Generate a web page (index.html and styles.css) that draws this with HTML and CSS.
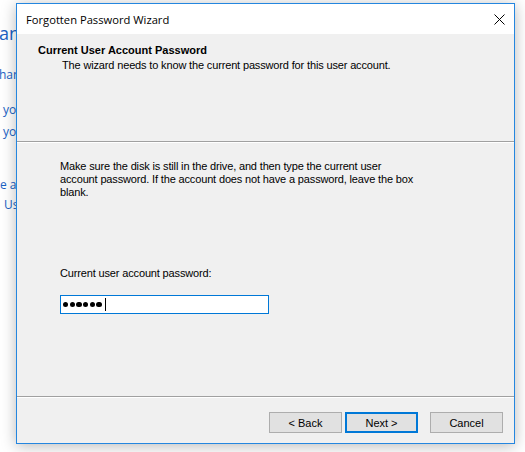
FILE: index.html
```html
<!DOCTYPE html>
<html>
<head>
<meta charset="utf-8">
<link rel="stylesheet" href="styles.css">
</head>
<body>
<div class="desktop">
  <div class="panel">
    <div class="pl pl-head">ang</div>
    <div class="pl pl-2">han</div>
    <div class="pl pl-3">yo</div>
    <div class="pl pl-4">yo</div>
    <div class="pl pl-5">e ar</div>
    <div class="pl pl-6">Us</div>
  </div>

  <div class="window">
    <div class="titlebar">
      <span class="title">Forgotten Password Wizard</span>
      <svg class="close" width="11" height="11" viewBox="0 0 11 11">
        <path d="M0.5 0.5 L10.5 10.5 M10.5 0.5 L0.5 10.5" stroke="#000" stroke-width="1" fill="none"/>
      </svg>
    </div>
    <div class="header">
      <div class="h-title">Current User Account Password</div>
      <div class="h-sub">The wizard needs to know the current password for this user account.</div>
    </div>
    <div class="sep"></div>
    <div class="content">
      <p class="para">Make sure the disk is still in the drive, and then type the current user<br>account password. If the account does not have a password, leave the box<br>blank.</p>
      <div class="label">Current user account password:</div>
      <div class="input">
        <span class="dot"></span><span class="dot"></span><span class="dot"></span><span class="dot"></span><span class="dot"></span><span class="dot"></span><span class="caret"></span>
      </div>
    </div>
    <div class="sep"></div>
    <div class="footer">
      <button class="btn">&lt; Back</button>
      <button class="btn btn-default">Next &gt;</button>
      <button class="btn btn-cancel">Cancel</button>
    </div>
  </div>
</div>
</body>
</html>
```

FILE: styles.css
```css
* { box-sizing: border-box; }
html, body { margin: 0; padding: 0; }
body {
  width: 525px;
  height: 452px;
  overflow: hidden;
  background: #ffffff;
  font-family: "Liberation Sans", Arial, sans-serif;
}
.desktop {
  position: relative;
  width: 525px;
  height: 452px;
  overflow: hidden;
}
.panel {
  padding-top: 21px;
  color: #1a62c4;
  font-family: "Open Sans", "Noto Sans", sans-serif;
  font-size: 12px;
  white-space: nowrap;
}
.pl { line-height: 16px; }
.pl-head { font-size: 18px; line-height: 24px; margin-left: -1px; }
.pl-2 { margin-top: 22px; margin-left: -1px; }
.pl-3 { margin-top: 19px; margin-left: 3px; }
.pl-4 { margin-top: 6px; margin-left: 3px; }
.pl-5 { margin-top: 37px; margin-left: 0; }
.pl-6 { margin-top: 4px; margin-left: 4px; }

.window {
  position: absolute;
  left: 16px;
  top: 3px;
  width: 499px;
  height: 441px;
  border: 1px solid #2486df;
  background: #f0f0f0;
  display: flex;
  flex-direction: column;
  box-shadow: 0 2px 14px rgba(0, 0, 0, 0.28);
}
.titlebar {
  height: 30px;
  flex: 0 0 30px;
  background: #ffffff;
  display: flex;
  align-items: center;
  justify-content: space-between;
  padding-left: 9px;
  padding-right: 9px;
}
.title {
  font-family: "Open Sans", "Noto Sans", sans-serif;
  font-size: 11.2px;
  color: #000;
}
.close { display: block; }

.header {
  flex: 0 0 107px;
  padding-top: 10px;
  font-size: 11px;
  line-height: 13px;
  color: #000;
  letter-spacing: -0.15px;
}
.h-title {
  font-weight: bold;
  padding-left: 21px;
  letter-spacing: 0;
}
.h-sub {
  padding-left: 45px;
  margin-top: 2px;
}
.sep {
  flex: 0 0 2px;
  border-top: 1px solid #a0a0a0;
  border-bottom: 1px solid #ffffff;
}
.content {
  flex: 1 1 auto;
  padding-top: 17px;
  padding-left: 43px;
  font-size: 11px;
  line-height: 13px;
  color: #000;
  letter-spacing: -0.15px;
}
.para {
  margin: 0;
  white-space: nowrap;
}
.label {
  margin-top: 68px;
}
.input {
  margin-top: 15px;
  width: 209px;
  height: 19px;
  border: 1px solid #0078d7;
  background: #ffffff;
  display: flex;
  align-items: center;
  padding-left: 2px;
  gap: 1.5px;
}
.dot {
  width: 5.2px;
  height: 5.2px;
  border-radius: 50%;
  background: #000;
}
.caret {
  width: 1px;
  height: 13px;
  background: #000;
  margin-left: 1.5px;
}
.footer {
  flex: 0 0 45px;
  display: flex;
  justify-content: flex-end;
  align-items: flex-start;
  padding-top: 14px;
  padding-right: 11px;
  gap: 3px;
}
.btn {
  width: 73px;
  height: 21px;
  padding: 0;
  margin: 0;
  border: 1px solid #adadad;
  background: #e1e1e1;
  font-family: "Liberation Sans", Arial, sans-serif;
  font-size: 11px;
  color: #000;
}
.btn-default {
  border: 2px solid #0078d7;
}
.btn-cancel {
  margin-left: 9px;
}
```
